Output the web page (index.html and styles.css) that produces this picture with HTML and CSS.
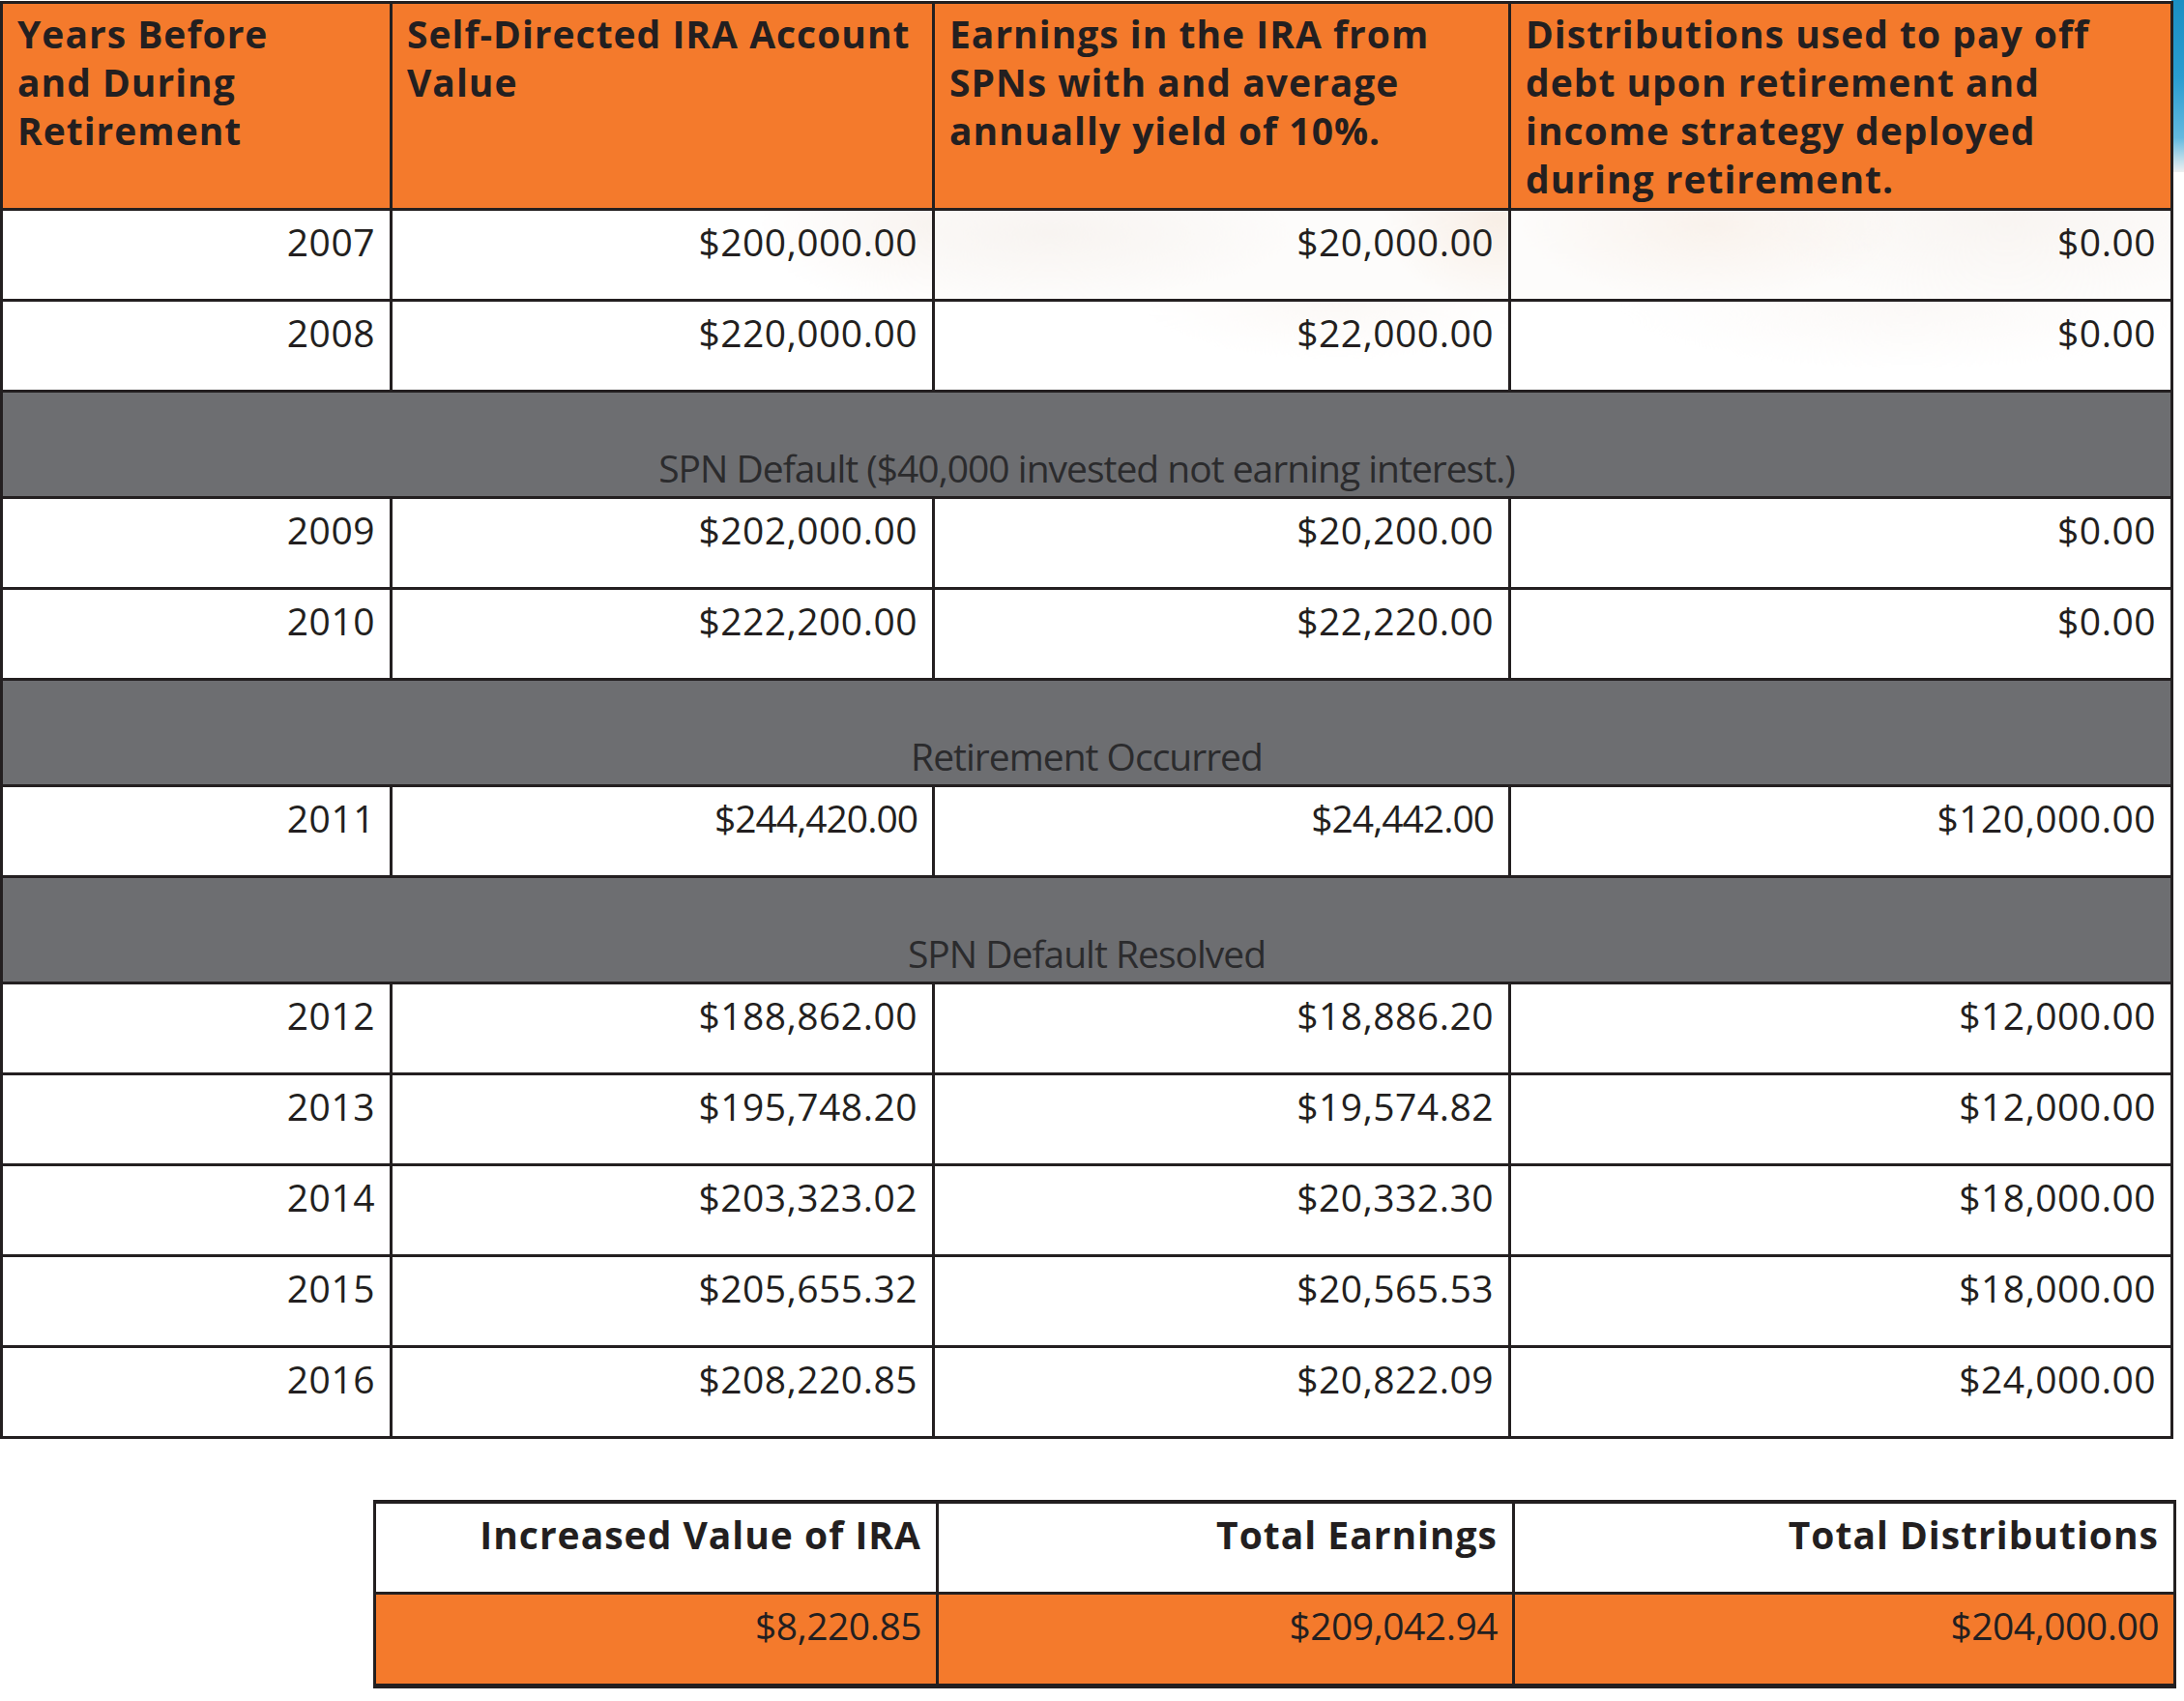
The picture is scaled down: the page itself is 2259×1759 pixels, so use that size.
FILE: index.html
```html
<!DOCTYPE html>
<html lang="en">
<head>
<meta charset="utf-8">
<title>Self-Directed IRA with SPNs</title>
<link rel="stylesheet" href="styles.css">
</head>
<body>
<main class="page">
  <table class="grid">
    <colgroup>
      <col class="c1"><col class="c2"><col class="c3"><col class="c4">
    </colgroup>
    <thead>
      <tr class="head">
        <th>Years Before<br>and During<br>Retirement</th>
        <th>Self-Directed IRA Account<br>Value</th>
        <th>Earnings in the IRA from<br>SPNs with and average<br>annually yield of 10%.</th>
        <th>Distributions used to pay off<br>debt upon retirement and<br>income strategy deployed<br>during retirement.</th>
      </tr>
    </thead>
    <tbody>
      <tr class="row"><td>2007</td><td class="ph2">$200,000.00</td><td class="ph3">$20,000.00</td><td class="ph4">$0.00</td></tr>
      <tr class="row"><td>2008</td><td>$220,000.00</td><td class="ph3b">$22,000.00</td><td class="ph4b">$0.00</td></tr>
      <tr class="band"><td colspan="4">SPN Default ($40,000 invested not earning interest.)</td></tr>
      <tr class="row"><td>2009</td><td>$202,000.00</td><td>$20,200.00</td><td>$0.00</td></tr>
      <tr class="row"><td>2010</td><td>$222,200.00</td><td>$22,220.00</td><td>$0.00</td></tr>
      <tr class="band"><td colspan="4">Retirement Occurred</td></tr>
      <tr class="row"><td>2011</td><td class="tight">$244,420.00</td><td class="tight">$24,442.00</td><td>$120,000.00</td></tr>
      <tr class="band"><td colspan="4">SPN Default Resolved</td></tr>
      <tr class="row"><td>2012</td><td>$188,862.00</td><td>$18,886.20</td><td>$12,000.00</td></tr>
      <tr class="row"><td>2013</td><td>$195,748.20</td><td>$19,574.82</td><td>$12,000.00</td></tr>
      <tr class="row"><td>2014</td><td>$203,323.02</td><td>$20,332.30</td><td>$18,000.00</td></tr>
      <tr class="row"><td>2015</td><td>$205,655.32</td><td>$20,565.53</td><td>$18,000.00</td></tr>
      <tr class="row"><td>2016</td><td>$208,220.85</td><td>$20,822.09</td><td>$24,000.00</td></tr>
    </tbody>
  </table>

  <table class="summary">
    <colgroup>
      <col class="s1"><col class="s2"><col class="s3">
    </colgroup>
    <thead>
      <tr>
        <th>Increased Value of IRA</th>
        <th>Total Earnings</th>
        <th>Total Distributions</th>
      </tr>
    </thead>
    <tbody>
      <tr>
        <td>$8,220.85</td>
        <td>$209,042.94</td>
        <td>$204,000.00</td>
      </tr>
    </tbody>
  </table>
</main>
</body>
</html>
```

FILE: styles.css
```css
html, body {
  margin: 0;
  padding: 0;
}

body {
  background:
    linear-gradient(to bottom, #1b8fc3 0%, #2a9dd0 45%, #63b9df 80%, #b9dcea 92%, #eef0f1 100%) right top / 13px 178px no-repeat,
    #ffffff;
  font-family: "Open Sans", "Liberation Sans", sans-serif;
  color: #231f20;
}

.page {
  padding-top: 1px;
  width: 2246px;
}

/* ---------- main table ---------- */
.grid {
  border-collapse: collapse;
  table-layout: fixed;
  width: 2245px;
}

.c1 { width: 403px; }
.c2 { width: 561px; }
.c3 { width: 596px; }
.c4 { width: 685px; }

.grid th,
.grid td {
  border: 3px solid #231f20;
  padding: 0 15px;
  font-size: 39px;
  line-height: 50px;
}

.head th {
  background: #f47a2c;
  font-weight: 700;
  letter-spacing: 1px;
  text-align: left;
  vertical-align: top;
  white-space: nowrap;
  height: 214px;
  padding-top: 6px;
  box-sizing: border-box;
}

.row td {
  background: #ffffff;
  text-align: right;
  vertical-align: top;
  height: 94px;
  padding-top: 7px;
  letter-spacing: 0.5px;
  box-sizing: border-box;
}

.row td.tight {
  letter-spacing: -1px;
}

/* faint photo showing through the first rows */
.row td.ph2 {
  background:
    radial-gradient(ellipse 180px 90px at 100% 15%, rgba(238, 226, 216, 0.4), rgba(255, 255, 255, 0) 100%),
    #ffffff;
}
.row td.ph3 {
  background:
    radial-gradient(ellipse 260px 70px at 20% 25%, rgba(240, 232, 226, 0.4), rgba(255, 255, 255, 0) 100%),
    radial-gradient(ellipse 120px 90px at 98% 10%, rgba(242, 222, 204, 0.45), rgba(255, 255, 255, 0) 100%),
    #fdfcfb;
}
.row td.ph4 {
  background:
    radial-gradient(ellipse 200px 80px at 30% 15%, rgba(244, 230, 218, 0.45), rgba(255, 255, 255, 0) 100%),
    radial-gradient(ellipse 260px 90px at 75% 10%, rgba(242, 234, 228, 0.4), rgba(255, 255, 255, 0) 100%),
    #fdfcfb;
}
.row td.ph3b {
  background:
    radial-gradient(ellipse 200px 60px at 70% 0%, rgba(246, 238, 232, 0.4), rgba(255, 255, 255, 0) 100%),
    #ffffff;
}
.row td.ph4b {
  background:
    radial-gradient(ellipse 300px 70px at 60% 0%, rgba(246, 240, 236, 0.45), rgba(255, 255, 255, 0) 100%),
    #ffffff;
}

.band td {
  background: #6d6e71;
  color: #2b2b2d;
  text-align: center;
  vertical-align: bottom;
  letter-spacing: -1px;
  height: 110px;
  padding-bottom: 4px;
  box-sizing: border-box;
}

/* ---------- summary table ---------- */
.summary {
  border-collapse: collapse;
  table-layout: fixed;
  width: 1862px;
  margin: 63px 0 0 386px;
}

.s1 { width: 582px; }
.s2 { width: 596px; }
.s3 { width: 684px; }

.summary th,
.summary td {
  border: 3px solid #231f20;
  padding: 7px 15px 0;
  font-size: 39px;
  line-height: 50px;
  text-align: right;
  vertical-align: top;
  box-sizing: border-box;
}

.summary th {
  background: #ffffff;
  font-weight: 700;
  letter-spacing: 1px;
  height: 94px;
  border-top-width: 4px;
}

.summary td {
  background: #f47a2c;
  height: 96px;
  border-bottom-width: 5px;
  letter-spacing: -0.5px;
}
```
